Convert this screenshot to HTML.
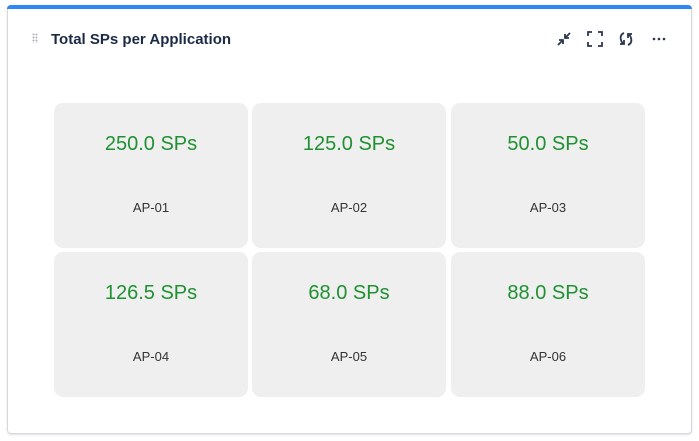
<!DOCTYPE html>
<html><head><style>
body{margin:0;width:699px;height:441px;background:#fff;font-family:"Liberation Sans",sans-serif;position:relative;overflow:hidden}
.card{position:absolute;left:7px;top:5px;width:683px;height:428px;border:1px solid #d5d8de;border-top:none;border-radius:4px;box-shadow:0 1px 2px rgba(0,0,0,.12)}
.bar{position:absolute;left:7px;top:5px;width:685px;height:4px;background:#2f86f6;border-radius:4px 4px 0 0}
.title{position:absolute;left:51px;top:31px;font-size:15px;font-weight:bold;color:#1c2b45}
.grip{position:absolute;left:32px;top:33px;width:6px;height:10px;background-image:radial-gradient(circle,#b0b4bb 0.9px,transparent 1.1px);background-size:3px 3px}
.t{position:absolute;width:194px;height:145px;background:#efefef;border-radius:9px;text-align:center}
.v{position:absolute;left:0;right:0;top:30px;font-size:20px;color:#1f9132}
.l{position:absolute;left:0;right:0;top:97px;font-size:13px;color:#333}
svg{position:absolute}
</style></head><body>
<div class="card"></div><div class="bar"></div>
<div class="grip"></div>
<div class="title">Total SPs per Application</div>
<svg style="left:555px;top:30px" width="18" height="18" viewBox="0 0 18 18" fill="none" stroke="#2b3650" stroke-width="1.8"><path d="M3 15l5-5M4 10h4v4M15 3l-5 5M10 4v4h4"/></svg>
<svg style="left:586px;top:30px" width="18" height="18" viewBox="0 0 18 18" fill="none" stroke="#2b3650" stroke-width="1.8"><path d="M2 6V2h4M12 2h4v4M16 12v4h-4M6 16H2v-4"/></svg>
<svg style="left:617px;top:30px" width="18" height="18" viewBox="0 0 18 18" fill="none" stroke="#2b3650" stroke-width="1.8"><path d="M7 3C4 4 3 7 4 10c.5 2 2 3.5 3 4M11 15c3-1 4-4 3-7-.5-2-2-3.5-3-4M7 10v4H3M11 8V4h4"/></svg>
<svg style="left:652px;top:37px" width="14" height="4"><circle cx="2" cy="2" r="1.3" fill="#2b3650"/><circle cx="7" cy="2" r="1.3" fill="#2b3650"/><circle cx="12" cy="2" r="1.3" fill="#2b3650"/></svg>
<div class="t" style="left:54px;top:103px"><div class="v">250.0 SPs</div><div class="l">AP-01</div></div>
<div class="t" style="left:252px;top:103px"><div class="v">125.0 SPs</div><div class="l">AP-02</div></div>
<div class="t" style="left:451px;top:103px"><div class="v">50.0 SPs</div><div class="l">AP-03</div></div>
<div class="t" style="left:54px;top:252px"><div class="v">126.5 SPs</div><div class="l">AP-04</div></div>
<div class="t" style="left:252px;top:252px"><div class="v">68.0 SPs</div><div class="l">AP-05</div></div>
<div class="t" style="left:451px;top:252px"><div class="v">88.0 SPs</div><div class="l">AP-06</div></div>
</body></html>
